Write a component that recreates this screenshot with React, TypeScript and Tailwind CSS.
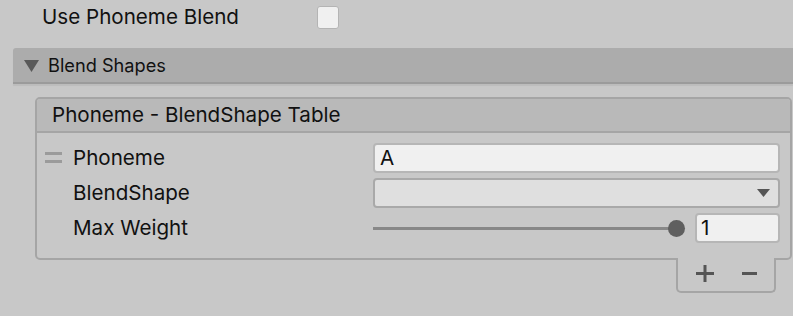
import React from "react";

const font = { fontFamily: "Inter, 'Noto Sans', sans-serif" };

const FieldRow = ({ label, handle, children }: { label: string; handle?: boolean; children: React.ReactNode }) => (
  <div className="flex items-center h-[30px]">
    <div className="w-[36px] flex justify-start pl-[8px]">
      {handle && (
        <div className="flex flex-col gap-[5px] mt-[-2px]">
          <div className="w-[17px] h-[3px] bg-[#9b9b9b]" />
          <div className="w-[17px] h-[3px] bg-[#9b9b9b]" />
        </div>
      )}
    </div>
    <div className="w-[300px] text-[20.6px] text-[#111] leading-none">{label}</div>
    <div className="flex-1 h-full">{children}</div>
  </div>
);

export default function App() {
  return (
    <div className="w-[793px] h-[316px] bg-[#c8c8c8] overflow-hidden" style={font}>
      {/* toggle row */}
      <div className="flex items-center pl-[42px] pt-[6px] h-[29px]">
        <div className="w-[275px] text-[20.6px] text-[#111] leading-none">Use Phoneme Blend</div>
        <div className="w-[22px] h-[23px] bg-[#f0f0f0] border border-[#b4b4b4] rounded-[3px]" />
      </div>

      {/* foldout header */}
      <div className="ml-[13px] mt-[19px] h-[36px] bg-[#acacac] border-b-2 border-[#9b9b9b] rounded-tl-[3px] shadow-[0_2px_1px_rgba(0,0,0,0.06)] flex items-center">
        <svg width="15" height="12" viewBox="0 0 15 12" className="ml-[11px] mt-[1px]">
          <polygon points="0,0 15,0 7.5,12" fill="#595959" />
        </svg>
        <span className="ml-[9px] text-[18.2px] text-[#111] leading-none">Blend Shapes</span>
      </div>

      {/* table */}
      <div className="ml-[35px] mt-[13px] w-[757px]">
        <div className="border-2 border-[#a5a5a5] rounded-[5px] overflow-hidden">
          <div className="h-[34px] bg-[#b9b9b9] border-b-2 border-[#a5a5a5] flex items-center pl-[15px]">
            <span className="text-[20.6px] text-[#111] leading-none">Phoneme - BlendShape Table</span>
          </div>
          <div className="pt-[10px] pb-[15px] pr-[10px] flex flex-col gap-[5px]">
            <FieldRow label="Phoneme" handle>
              <div className="h-full bg-[#f0f0f0] border-2 border-[#b6b6b6] rounded-[4px] flex items-center pl-[5px] text-[20.6px] text-[#111] leading-none">
                A
              </div>
            </FieldRow>
            <FieldRow label="BlendShape">
              <div className="h-full bg-[#dfdfdf] border-2 border-[#a9a9a9] rounded-[4px] flex items-center justify-end pr-[8px]">
                <svg width="13" height="8" viewBox="0 0 13 8">
                  <polygon points="0,0 13,0 6.5,8" fill="#555" />
                </svg>
              </div>
            </FieldRow>
            <FieldRow label="Max Weight">
              <div className="h-full flex items-center">
                <div className="flex-1 flex items-center">
                  <div className="flex-1 h-[3px] bg-[#888]" />
                  <div className="w-[17px] h-[17px] rounded-full bg-[#5f5f5f] -ml-[9px]" />
                </div>
                <div className="ml-[10px] w-[85px] h-full bg-[#f0f0f0] border-2 border-[#b6b6b6] rounded-[4px] flex items-center pl-[4px] text-[20.6px] text-[#111] leading-none">
                  1
                </div>
              </div>
            </FieldRow>
          </div>
        </div>
        <div className="flex justify-end pr-[16px]">
          <div className="-mt-[2px] w-[100px] h-[35px] bg-[#c8c8c8] border-x-2 border-b-2 border-[#a5a5a5] rounded-b-[5px] flex items-center justify-center gap-[28px] pb-[2px]">
            <svg width="18" height="17" viewBox="0 0 18 17">
              <rect x="0" y="7" width="18" height="3" fill="#555" />
              <rect x="7.5" y="0" width="3" height="17" fill="#555" />
            </svg>
            <svg width="15" height="3" viewBox="0 0 15 3">
              <rect x="0" y="0" width="15" height="3" fill="#555" />
            </svg>
          </div>
        </div>
      </div>
    </div>
  );
}
